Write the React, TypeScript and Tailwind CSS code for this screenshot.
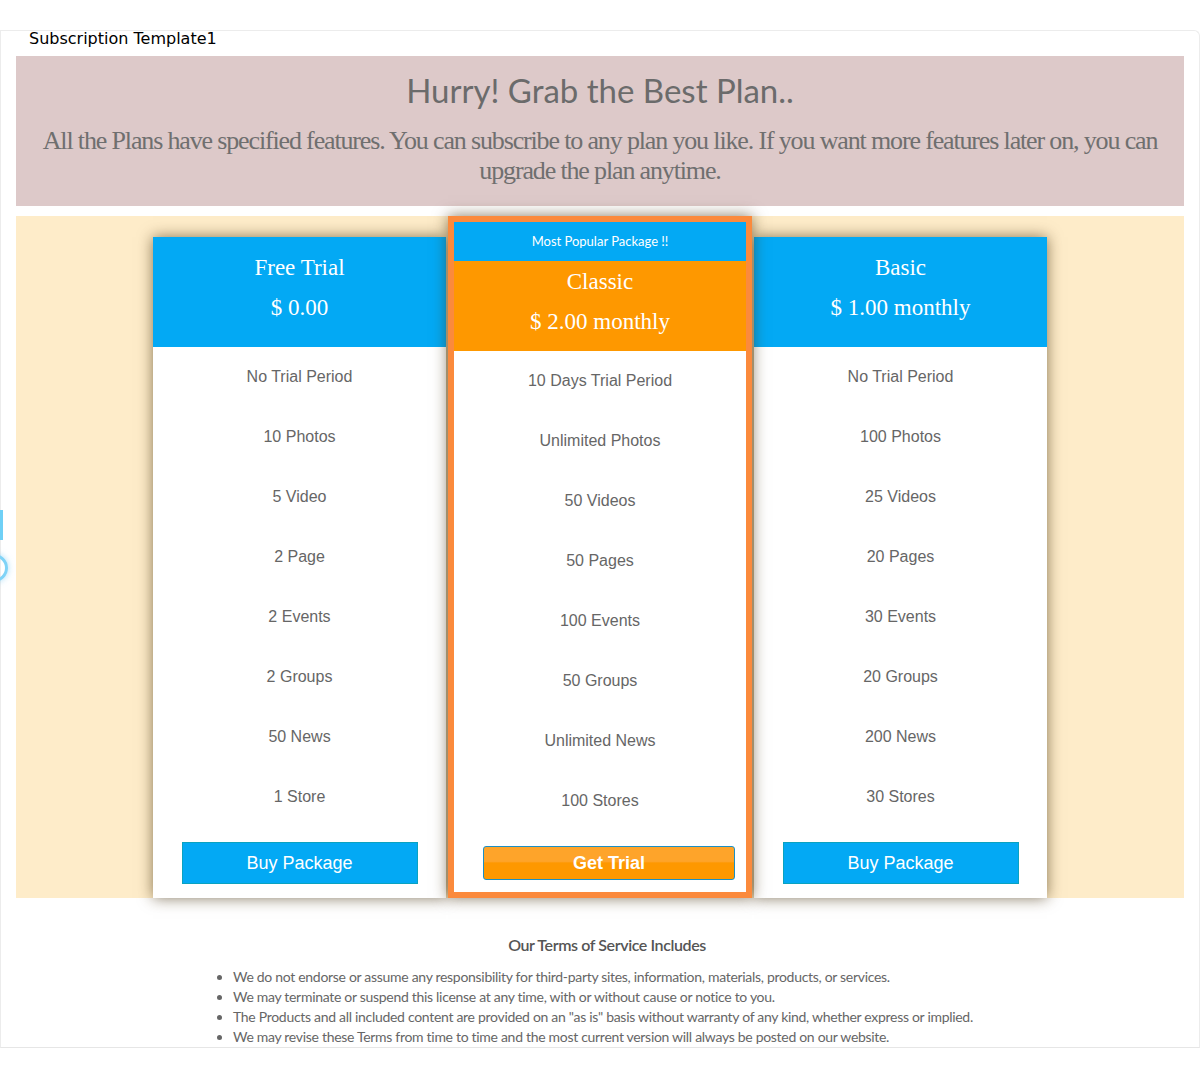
import React from 'react';

interface Plan {
  name: string;
  price: string;
  features: string[];
  popular?: boolean;
}

const plans: Plan[] = [
  {
    name: 'Free Trial',
    price: '$ 0.00',
    features: ['No Trial Period', '10 Photos', '5 Video', '2 Page', '2 Events', '2 Groups', '50 News', '1 Store'],
  },
  {
    name: 'Classic',
    price: '$ 2.00 monthly',
    popular: true,
    features: ['10 Days Trial Period', 'Unlimited Photos', '50 Videos', '50 Pages', '100 Events', '50 Groups', 'Unlimited News', '100 Stores'],
  },
  {
    name: 'Basic',
    price: '$ 1.00 monthly',
    features: ['No Trial Period', '100 Photos', '25 Videos', '20 Pages', '30 Events', '20 Groups', '200 News', '30 Stores'],
  },
];

const terms = [
  'We do not endorse or assume any responsibility for third-party sites, information, materials, products, or services.',
  'We may terminate or suspend this license at any time, with or without cause or notice to you.',
  'The Products and all included content are provided on an "as is" basis without warranty of any kind, whether express or implied.',
  'We may revise these Terms from time to time and the most current version will always be posted on our website.',
];

function PlanCard({ plan }: { plan: Plan }) {
  return (
    <div className="w-[293px] mt-[21px] bg-white flex flex-col shadow-[0_0_14px_rgba(70,50,15,0.65)]">
      <div className="h-[110px] bg-[#03a9f4] flex flex-col items-center pt-[13px] text-white font-['Liberation_Serif',serif] text-[23px]">
        <div className="leading-[36px]">{plan.name}</div>
        <div className="leading-[36px] mt-[4px]">{plan.price}</div>
      </div>
      <div className="flex flex-col">
        {plan.features.map((f) => (
          <div key={f} className="h-[60px] pt-[19px] text-center text-[16px] leading-[22px] text-[#666] font-['Liberation_Sans',Arial,sans-serif]">
            {f}
          </div>
        ))}
      </div>
      <div className="flex justify-center pt-[15px] pb-[14px]">
        <button className="w-[236px] h-[42px] bg-[#03a9f4] border border-[#0aa2c0] text-white text-[18px] font-['Liberation_Sans',Arial,sans-serif]">
          Buy Package
        </button>
      </div>
    </div>
  );
}

function PopularCard({ plan }: { plan: Plan }) {
  return (
    <div className="w-[304px] mx-[2px] bg-white border-[6px] border-[#fb8a3c] flex flex-col shadow-[0_0_14px_rgba(70,50,15,0.65)] relative z-10">
      <div className="h-[39px] bg-[#03a9f4] flex items-center justify-center text-white text-[13px] font-['Lato',sans-serif]">
        Most Popular Package !!
      </div>
      <div className="h-[90px] bg-[#fe9800] flex flex-col items-center pt-[3px] text-white font-['Liberation_Serif',serif] text-[23px]">
        <div className="leading-[36px]">{plan.name}</div>
        <div className="leading-[36px] mt-[4px]">{plan.price}</div>
      </div>
      <div className="flex flex-col">
        {plan.features.map((f) => (
          <div key={f} className="h-[60px] pt-[19px] text-center text-[16px] leading-[22px] text-[#666] font-['Liberation_Sans',Arial,sans-serif]">
            {f}
          </div>
        ))}
      </div>
      <div className="flex justify-center pt-[15px] pl-[18px]">
        <button className="w-[252px] h-[34px] rounded-[3px] border border-[#1b8fc4] bg-[linear-gradient(#fea42a_0%,#fea42a_45%,#fe9800_50%,#fe9800_100%)] text-white text-[18px] font-bold font-['Liberation_Sans',Arial,sans-serif]">
          Get Trial
        </button>
      </div>
    </div>
  );
}

export default function App() {
  return (
    <div className="min-h-[1084px] bg-white relative font-['Liberation_Sans',sans-serif]">
      {/* side widget peeking in from the left */}
      <div className="absolute left-0 top-[510px] w-[3px] h-[30px] bg-[#6fd0f6]" />
      <div className="absolute left-[-20px] top-[554px] w-[28px] h-[28px] rounded-full border-[3px] border-[#7fd3f7] shadow-[0_0_6px_rgba(120,200,240,0.6)]" />

      <div className="pt-[30px]">
        <div className="w-[1200px] border border-[#ececec] border-b-[#e6e6e6] rounded-tr-[6px] px-[15px]">
          <div className="pl-[13px] h-[25px] text-[16px] leading-[16px] text-black font-['DejaVu_Sans',sans-serif]">
            Subscription Template1
          </div>

          <div className="bg-[#ddc9c9] h-[150px] flex flex-col items-center pt-[12px] px-[20px] text-center">
            <h1 className="text-[33px] leading-[44px] text-[#6b6b6b] font-['Lato',sans-serif]">Hurry! Grab the Best Plan..</h1>
            <p className="mt-[14px] text-[26px] leading-[30px] tracking-[-1.15px] text-[#6f6f6f] font-['Liberation_Serif',serif]">
              All the Plans have specified features. You can subscribe to any plan you like. If you want more features later on, you can upgrade the plan anytime.
            </p>
          </div>

          <div className="mt-[10px] bg-[#feecc9] flex justify-center">
            <PlanCard plan={plans[0]} />
            <PopularCard plan={plans[1]} />
            <PlanCard plan={plans[2]} />
          </div>

          <div className="pt-[37px] flex flex-col items-center">
            <h3 className="pl-[14px] text-[16px] leading-[20px] font-semibold text-[#555] font-['Lato',sans-serif] tracking-[-0.4px]">Our Terms of Service Includes</h3>
            <ul className="mt-[12px] list-disc pl-[18px] self-start ml-[199px] text-[14px] leading-[20px] text-[#666] font-['Lato',sans-serif] tracking-[-0.3px] marker:text-[#666]">
              {terms.map((t) => (
                <li key={t}>{t}</li>
              ))}
            </ul>
          </div>
        </div>
      </div>
    </div>
  );
}
